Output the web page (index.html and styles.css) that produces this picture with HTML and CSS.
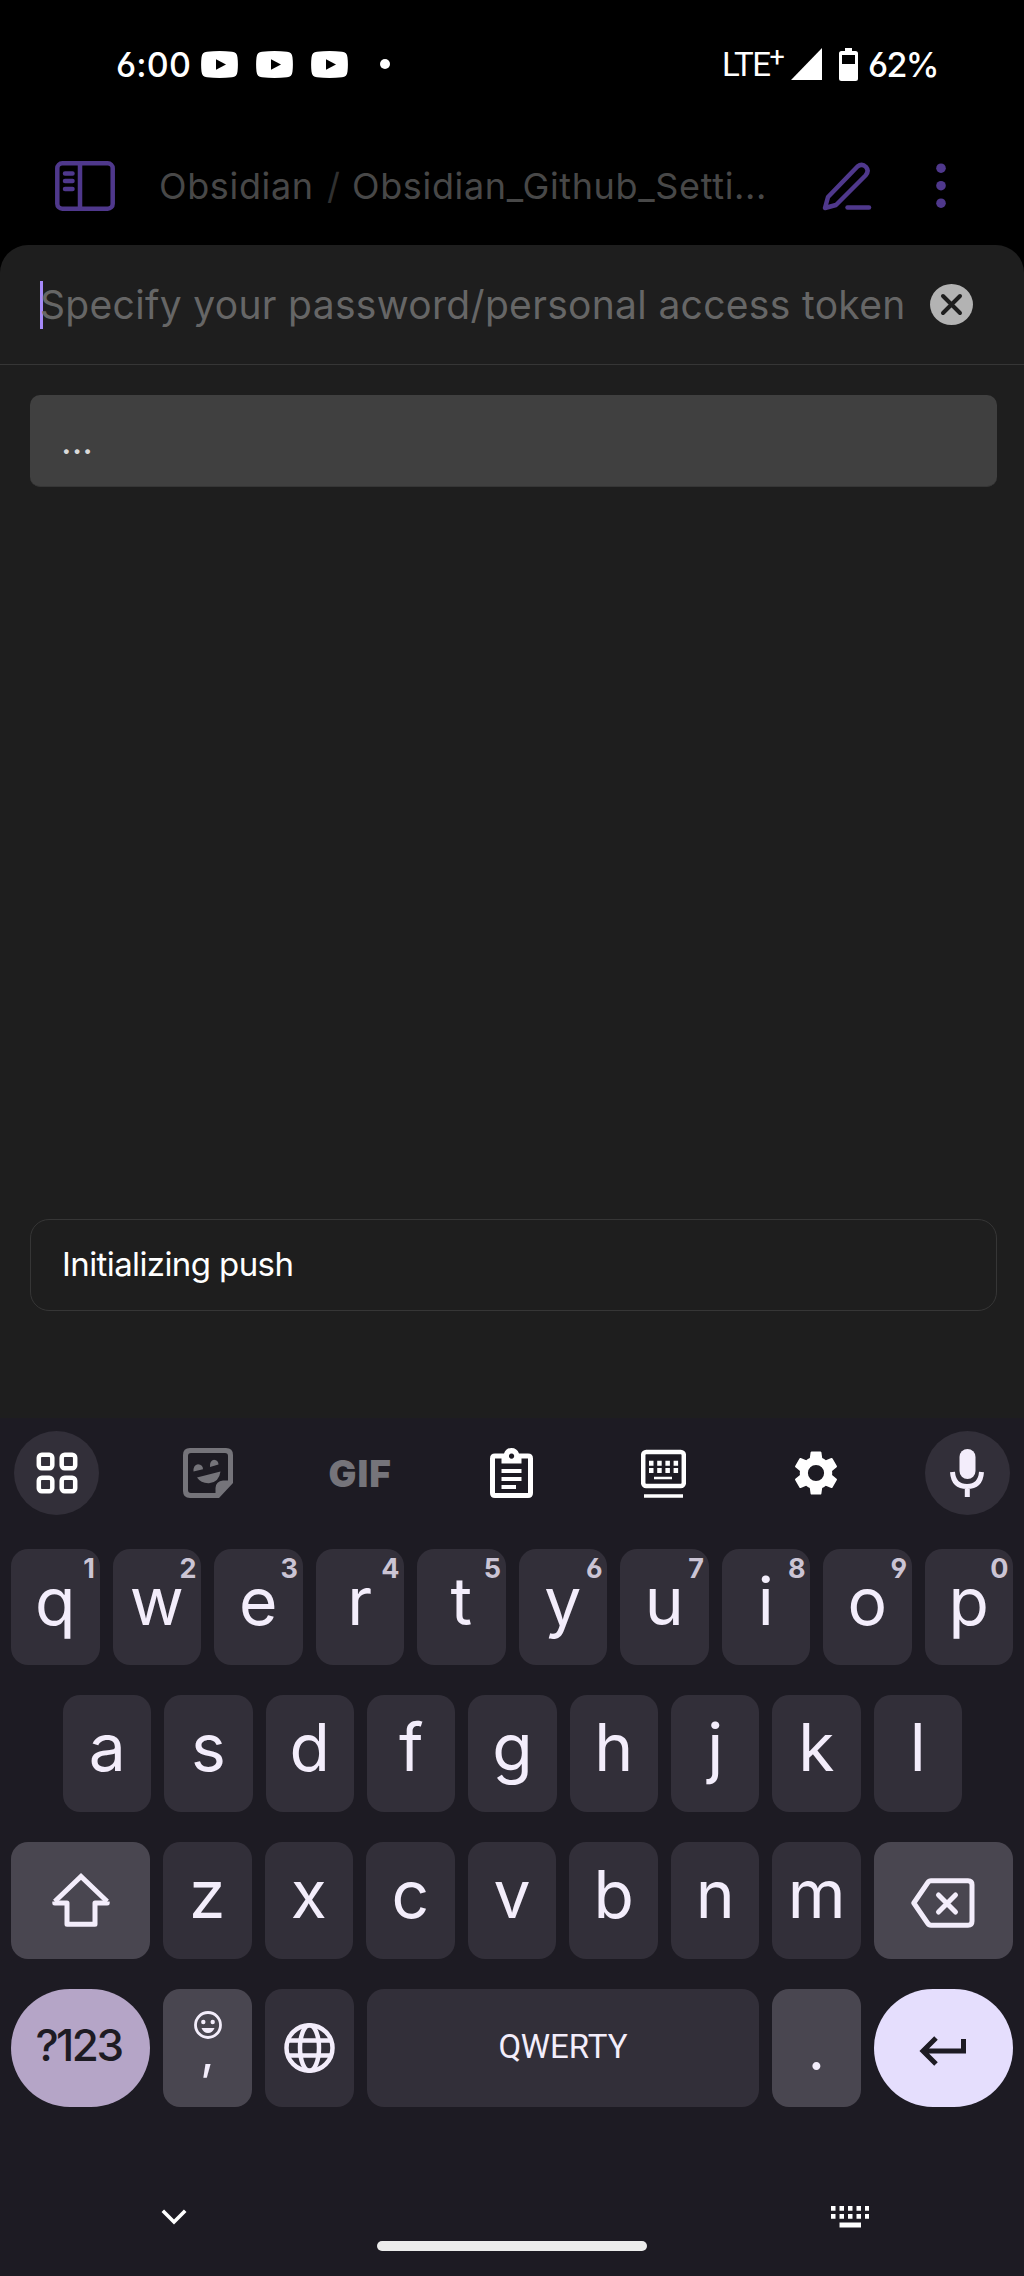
FILE: index.html
```html
<!DOCTYPE html>
<html lang="en">
<head>
<meta charset="utf-8">
<title>Obsidian</title>
<link rel="stylesheet" href="styles.css">
</head>
<body>
<div class="screen">
  <header class="status">
    <span class="clock">6:00</span>
    <div class="notifications">
      <svg class="yt" viewBox="0 0 37 27"><path fill="#fff" d="M6 .8Q18.500-.6 31 .8Q36 1 36.500 6.500Q37.300 13.500 36.500 20.500Q36 26 31 26.200Q18.500 27.600 6 26.200Q1 26 .5 20.500Q-.3 13.500 .5 6.500Q1 1 6 .8Z"/><path d="M15 8.200L25 13.500L15 18.700Z"/></svg>
      <svg class="yt" viewBox="0 0 37 27"><path fill="#fff" d="M6 .8Q18.500-.6 31 .8Q36 1 36.500 6.500Q37.300 13.500 36.500 20.500Q36 26 31 26.200Q18.500 27.600 6 26.200Q1 26 .5 20.500Q-.3 13.500 .5 6.500Q1 1 6 .8Z"/><path d="M15 8.200L25 13.500L15 18.700Z"/></svg>
      <svg class="yt" viewBox="0 0 37 27"><path fill="#fff" d="M6 .8Q18.500-.6 31 .8Q36 1 36.500 6.500Q37.300 13.500 36.500 20.500Q36 26 31 26.200Q18.500 27.600 6 26.200Q1 26 .5 20.500Q-.3 13.500 .5 6.500Q1 1 6 .8Z"/><path d="M15 8.200L25 13.500L15 18.700Z"/></svg>
    </div>
    <i class="more-dot"></i>
    <span class="network">LTE<span class="plus">+</span></span>
    <svg class="signal" viewBox="0 0 31 32"><path fill="#fff" d="M0 32L31 0V32Z"/></svg>
    <svg class="battery" viewBox="0 0 19 33"><path fill="#fff" fill-rule="evenodd" d="M6 0H13V3H16.500Q19 3 19 5.500V30.500Q19 33 16.500 33H2.500Q0 33 0 30.500V5.500Q0 3 2.500 3H6ZM3 7V16H16V7Z"/></svg>
    <span class="percent">62%</span>
  </header>

  <nav class="titlebar">
    <svg class="sidebar-icon" viewBox="0 0 60 50" fill="none" stroke="#4f388c" stroke-width="4.500" stroke-linecap="round"><rect x="2.300" y="2.300" width="55.400" height="45.400" rx="5"/><path d="M25 2.500V47.500M10 12.500H17.500M10 20H17.500M10 28H17.500"/></svg>
    <div class="crumbs"><span class="folder">Obsidian</span><span class="slash">/</span><span class="file">Obsidian_Github_Setti...</span></div>
    <svg class="pencil-icon" viewBox="0 0 50 49" fill="none" stroke="#4f388c" stroke-width="4.500" stroke-linecap="round" stroke-linejoin="round"><path d="M3 46L6 35L35.500 4.500Q40 0.800 44 5Q47.500 9 43.500 13.500L14 43Z"/><path d="M25.500 45.500H47"/></svg>
    <svg class="dots-icon" viewBox="0 0 10 46" fill="#4f388c"><circle cx="5" cy="5.200" r="4.800"/><circle cx="5" cy="22.700" r="4.800"/><circle cx="5" cy="40.200" r="4.800"/></svg>
  </nav>

  <main class="prompt">
    <div class="prompt-input">
      <i class="caret"></i>
      <span class="placeholder">Specify your password/personal access token</span>
      <svg class="clear" viewBox="0 0 43 41"><ellipse cx="21.500" cy="20.500" rx="21.500" ry="20.500" fill="#b3b3b3"/><path d="M13 12L30 29M30 12L13 29" stroke="#1e1e1e" stroke-width="4" stroke-linecap="round"/></svg>
    </div>
    <div class="suggestion"><span>...</span></div>
    <div class="notice"><span>Initializing push</span></div>
  </main>

  <section class="keyboard">
    <div class="toolbar">
      <div class="tool round"><svg width="42" height="42" viewBox="0 0 42 42" fill="none" stroke="#fff" stroke-width="4.500"><rect x="2.800" y="2.800" width="13.500" height="13.500" rx="3"/><rect x="25.700" y="2.800" width="13.500" height="13.500" rx="3"/><rect x="2.800" y="25.700" width="13.500" height="13.500" rx="3"/><rect x="25.700" y="25.700" width="13.500" height="13.500" rx="3"/></svg></div>
      <div class="tool"><svg width="50" height="50" viewBox="0 0 50 50" fill="#75747a"><path fill-rule="evenodd" d="M7 0H43Q50 0 50 7V35L36 50H7Q0 50 0 43V7Q0 0 7 0ZM8 5Q5 5 5 8V42Q5 45 8 45H32.500V40Q33 33 40 32.500H45V8Q45 5 42 5Z"/><path d="M10.500 23.500Q10 17 15 16.200Q20 16.500 20 21.200ZM27 19Q26.500 12.500 31 11.800Q35.500 12.500 35.500 16.500ZM14 29.500L37.500 23.500Q36 34.500 26 35.200Q18 35.500 14 29.500Z"/></svg></div>
      <div class="tool"><span class="gif">GIF</span></div>
      <div class="tool"><svg width="43" height="50" viewBox="0 0 43 50"><path fill="#fff" fill-rule="evenodd" d="M5 5.500H14Q16 0 21.500 0Q27 0 29 5.500H38Q43 5.500 43 10.500V45Q43 50 38 50H5Q0 50 0 45V10.500Q0 5.500 5 5.500ZM5 10.500V45H38V10.500H31.500V15.500H11.500V10.500ZM21.500 5.500A2.600 2.600 0 1 0 21.600 5.500Z"/><path stroke="#fff" stroke-width="4" d="M11.500 23H31.500M11.500 31H31.500M11.500 39H26"/></svg></div>
      <div class="tool"><svg width="45" height="49" viewBox="0 0 45 49"><rect x="2.200" y="3" width="40.600" height="34" rx="3" fill="none" stroke="#fff" stroke-width="4.500"/><path stroke="#fff" stroke-width="5" stroke-dasharray="4.500 3.700" d="M8 14.300H38M8 21.500H38"/><path stroke="#fff" stroke-width="2.500" d="M13 29H31"/><path stroke="#fff" stroke-width="3.500" d="M3 47H42"/></svg></div>
      <div class="tool"><svg width="54" height="54" viewBox="0 0 24 24" fill="#fff"><path d="M19.140 12.940c.04-.3.060-.61.060-.94 0-.32-.02-.64-.07-.94l2.030-1.580c.18-.14.230-.41.120-.61l-1.920-3.320c-.12-.22-.37-.29-.59-.22l-2.390.96c-.5-.38-1.030-.7-1.620-.94L14.400 2.810c-.04-.24-.24-.41-.48-.41h-3.840c-.24 0-.43.170-.47.410L9.250 5.350c-.59.240-1.130.57-1.620.94l-2.390-.96c-.22-.08-.47 0-.59.220L2.740 8.870c-.12.210-.08.470.12.610l2.030 1.580c-.05.3-.09.630-.09.940s.02.640.07.940l-2.030 1.580c-.18.140-.23.410-.12.610l1.920 3.320c.12.220.37.290.59.220l2.390-.96c.5.380 1.030.7 1.620.94l.36 2.540c.05.240.24.410.48.410h3.840c.24 0 .44-.17.470-.41l.36-2.540c.59-.24 1.130-.56 1.620-.94l2.390.96c.22.080.47 0 .59-.22l1.920-3.320c.12-.22.070-.47-.12-.61ZM12 15.600A3.600 3.600 0 1 1 12 8.400A3.600 3.600 0 0 1 12 15.600Z"/></svg></div>
      <div class="tool round"><svg width="36" height="48" viewBox="0 0 36 48" fill="#f3edfb"><rect x="10.500" y="0" width="16" height="30" rx="8"/><path fill="none" stroke="#f3edfb" stroke-width="5" d="M3.500 23Q4.500 37.500 18 37.500Q31.500 37.500 32.500 23M18.300 37V48"/></svg></div>
    </div>

    <div class="row first">
      <div class="key">q<sup>1</sup></div><div class="key">w<sup>2</sup></div><div class="key">e<sup>3</sup></div><div class="key">r<sup>4</sup></div><div class="key">t<sup>5</sup></div><div class="key">y<sup>6</sup></div><div class="key">u<sup>7</sup></div><div class="key">i<sup>8</sup></div><div class="key">o<sup>9</sup></div><div class="key">p<sup>0</sup></div>
    </div>
    <div class="row second">
      <div class="key">a</div><div class="key">s</div><div class="key">d</div><div class="key">f</div><div class="key">g</div><div class="key">h</div><div class="key">j</div><div class="key">k</div><div class="key">l</div>
    </div>
    <div class="row">
      <div class="key mod wide"><svg class="shift" width="58" height="54" viewBox="0 0 58 54" fill="none" stroke="#f3edfb" stroke-width="5" stroke-linejoin="round"><path stroke-linejoin="miter" d="M2.800 28.500L29 3.500L55.200 28.500"/><path d="M2.800 28.500V30H15V51.300H43V30H55.200V28.500"/></svg></div>
      <div class="key">z</div><div class="key">x</div><div class="key">c</div><div class="key">v</div><div class="key">b</div><div class="key">n</div><div class="key">m</div>
      <div class="key mod wide"><svg class="backspace" width="64" height="50" viewBox="0 0 64 50" fill="none" stroke="#f3edfb" stroke-width="5" stroke-linejoin="round" stroke-linecap="round"><path d="M2.800 25L16.500 5Q18 2.800 20 2.800H57Q61 2.800 61 6.800V43.200Q61 47.200 57 47.200H20Q18 47.200 16.500 45Z"/><path d="M27.500 17L44.500 34M44.500 17L27.500 34"/></svg></div>
    </div>
    <div class="row last">
      <div class="key wide symbols">?123</div>
      <div class="key mod comma"><svg width="28" height="28" viewBox="0 0 28 28" fill="#f3edfb"><circle cx="14" cy="14" r="12.500" fill="none" stroke="#f3edfb" stroke-width="2.800"/><circle cx="9.300" cy="11" r="2.200"/><circle cx="18.700" cy="11" r="2.200"/><path d="M7.500 17H20.500Q18.500 22 14 22Q9.500 22 7.500 17Z"/></svg><span>,</span></div>
      <div class="key"><svg class="globe" width="51" height="50" viewBox="0 0 51 50" fill="none" stroke="#f3edfb" stroke-width="4.500"><ellipse cx="25.500" cy="25" rx="23" ry="22.700"/><ellipse cx="25.500" cy="25" rx="9.500" ry="22.700"/><path d="M4 17.500H47M4 32.500H47"/></svg></div>
      <div class="key space">QWERTY</div>
      <div class="key mod period">.</div>
      <div class="key wide enter"><svg width="47" height="30" viewBox="0 0 47 30" fill="none" stroke="#1d1b23" stroke-width="5"><path d="M17 2L4 15L17 28M4 15H44.500V3"/></svg></div>
    </div>

    <footer class="navbar">
      <svg class="chevron" viewBox="0 0 26 16" fill="none" stroke="#fff" stroke-width="3.600"><path d="M1.800 1.800L13 13L24.200 1.800"/></svg>
      <i class="home"></i>
      <svg class="ime" viewBox="0 0 40 23"><path stroke="#fff" stroke-width="4.800" stroke-dasharray="4.500 4" d="M1 3.400H39M1 11.300H39"/><path fill="#fff" d="M9.500 17.500H31V22.500H9.500Z"/></svg>
    </footer>
  </section>
</div>
</body>
</html>
```

FILE: styles.css
```css
* { box-sizing: border-box; }
body { margin: 0; background: #000; font-family: Inter, "Liberation Sans", sans-serif; }
svg, i { display: block; flex: none; }
.screen { width: 1024px; height: 2276px; display: flex; flex-direction: column; overflow: hidden; }

/* status bar */
.status { height: 128px; padding-left: 116px; display: flex; align-items: center; color: #fff; white-space: nowrap; }
.clock { width: 85px; font-size: 34px; font-weight: 500; letter-spacing: .2px; font-feature-settings: "cv03", "cv04"; }
.notifications { display: flex; gap: 18px; }
.yt { width: 37px; height: 27px; }
.more-dot { width: 10px; height: 10px; border-radius: 50%; background: #fff; margin-left: 32px; }
.network { margin-left: 332px; width: 69px; display: flex; font: 400 33px Roboto, sans-serif; letter-spacing: -1.4px; }
.plus { font-size: 27px; line-height: 25px; }
.signal { width: 31px; height: 32px; }
.battery { width: 19px; height: 33px; margin-left: 17px; }
.percent { margin-left: 10px; font-size: 34px; font-weight: 500; letter-spacing: -1.7px; font-feature-settings: "cv03"; }

/* note header */
.titlebar { height: 117px; padding: 0 78px 0 55px; display: flex; align-items: center; padding-bottom: 1px; }
.sidebar-icon { width: 60px; height: 50px; }
.crumbs { width: 663px; margin-left: 44px; display: flex; font-size: 36px; color: #484848; white-space: nowrap; letter-spacing: .65px; }
.folder { width: 168px; }
.slash { width: 25px; color: #303030; }
.pencil-icon { width: 50px; height: 49px; }
.dots-icon { width: 10px; height: 46px; margin-left: 64px; }

/* prompt */
.prompt { height: 1173px; background: #1e1e1e; border-radius: 28px 28px 0 0; display: flex; flex-direction: column; }
.prompt-input { height: 120px; padding-left: 40px; border-bottom: 1px solid #363636; display: flex; align-items: center; }
.caret { width: 3px; height: 48px; background: #a68af9; }
.placeholder { width: 887px; margin-left: -3px; font-size: 39px; color: #666; white-space: nowrap; letter-spacing: .32px; }
.clear { width: 43px; height: 41px; margin-left: 3px; }
.suggestion, .notice { height: 92px; margin: 30px 27px 0 30px; padding-left: 31px; display: flex; align-items: center; font-size: 33px; }
.suggestion { background: #404040; border-bottom: 1px solid #363636; border-radius: 10px; color: #dadada; font-size: 37px; }
.notice { margin-top: 732px; padding-bottom: 2px; border: 1px solid #363636; border-radius: 19px; color: #fff; letter-spacing: -.6px; }

/* keyboard */
.keyboard { height: 858px; background: #1d1b23; color: #f3edfb; display: flex; flex-direction: column; }
.toolbar { height: 131px; padding: 13px 14px 0; display: flex; justify-content: space-between; }
.tool { width: 85px; height: 84px; display: flex; align-items: center; justify-content: center; }
.round { border-radius: 50%; background: #322f39; }
.gif { font-size: 37px; font-weight: 900; color: #75747a; letter-spacing: 1px; }
.row { height: 117px; margin: 0 11px 30px; display: flex; gap: 13px; }
.row.first { height: 116px; }
.row.second { padding: 0 51px 0 52px; }
.row.last { height: 118px; margin-bottom: 0; }
.key { position: relative; flex: 1 1 0; min-width: 0; background: #322f39; border-radius: 17px; display: flex; align-items: center; justify-content: center; font-size: 66px; line-height: 80px; padding-bottom: 13px; }
.key sup { position: absolute; right: 5px; top: 5px; font-size: 27px; line-height: 30px; font-weight: 700; letter-spacing: -.5px; color: #cbc4d4; font-feature-settings: "cv03", "cv04"; }
.mod { background: #494650; }
.wide { flex: none; width: 139px; }
.shift { margin-top: 11px; }
.backspace { margin: 18px 0 0 -2px; }
.symbols { border-radius: 62px; background: #b5a5c7; color: #1d1b23; font-size: 44px; font-weight: 500; letter-spacing: -2.5px; padding: 0 4px 6px 0; }
.comma { flex-direction: column; justify-content: flex-start; padding-top: 22px; }
.comma span { font-size: 50px; line-height: 50px; margin-top: -13px; }
.globe { margin-top: 13px; }
.space { flex: none; width: 392px; font: 400 33px Roboto, sans-serif; padding-bottom: 4px; }
.period { font-size: 60px; padding-bottom: 0; }
.enter { border-radius: 62px; background: #e5defd; padding: 5px 2px 0 0; }

/* navigation */
.navbar { height: 169px; padding: 98px 154px 0 161px; display: flex; justify-content: space-between; align-items: flex-start; }
.chevron { width: 26px; height: 16px; margin-top: 4px; }
.home { width: 270px; height: 10px; border-radius: 5px; background: #ececec; margin-top: 36px; margin-left: 6px; }
.ime { width: 40px; height: 23px; }
```
